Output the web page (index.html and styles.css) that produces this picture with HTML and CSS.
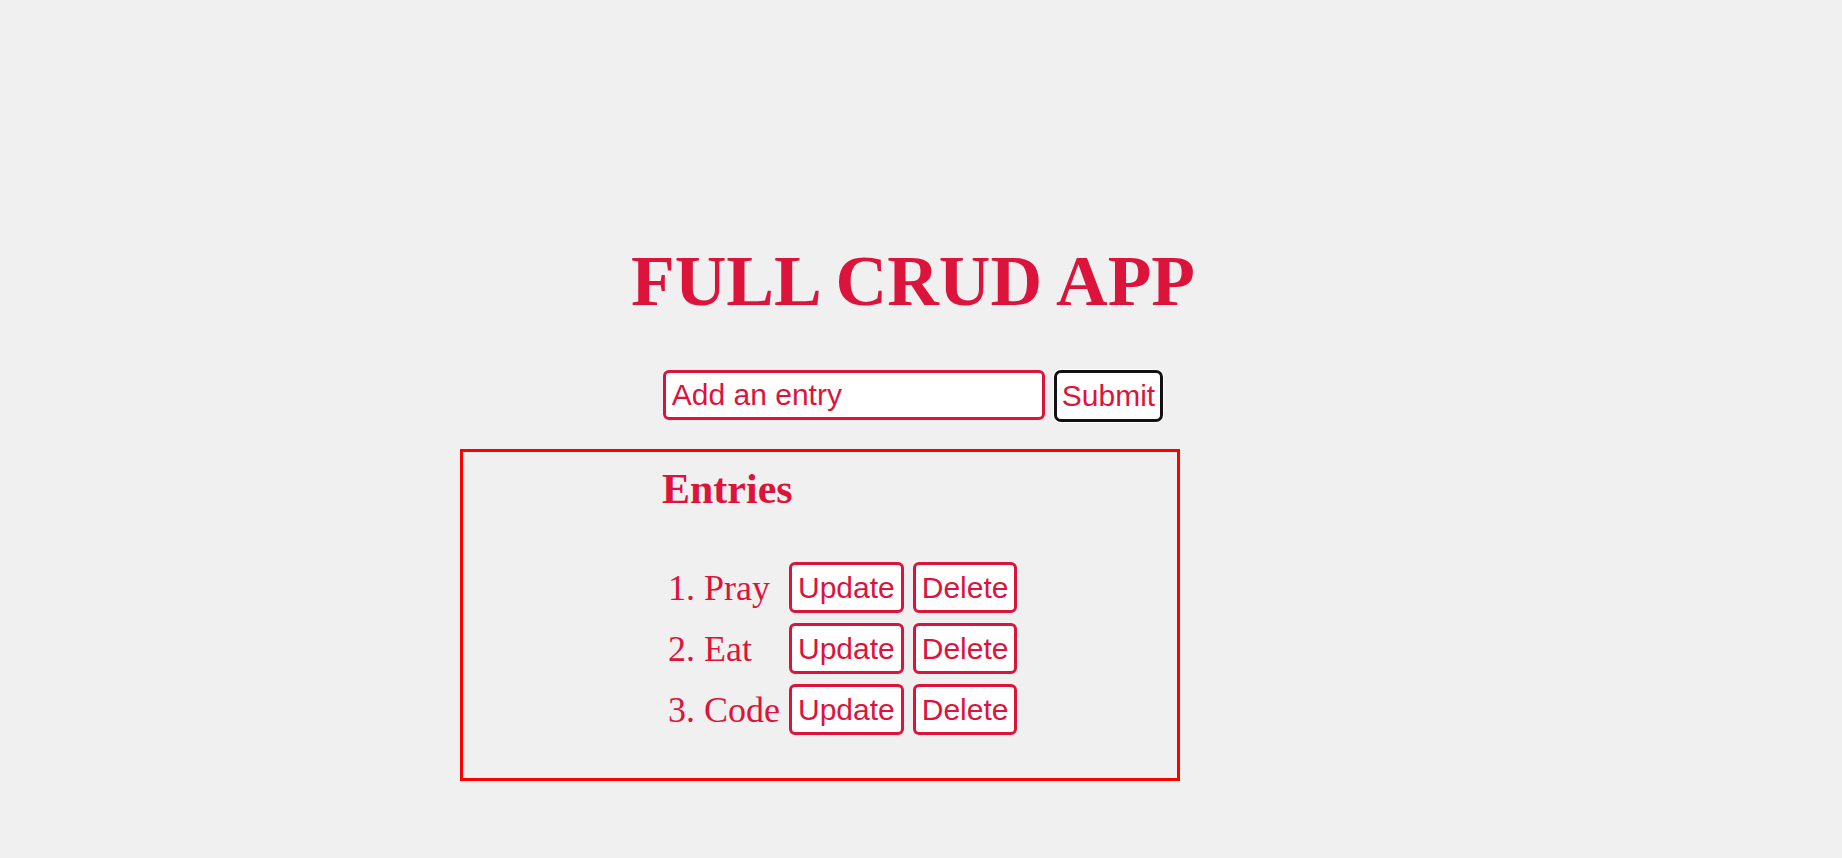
FILE: index.html
```html
<!DOCTYPE html>
<html lang="en">
<head>
<meta charset="utf-8">
<title>Full CRUD App</title>
<link rel="stylesheet" href="styles.css">
</head>
<body>
<div class="app">
  <h1 class="title">FULL CRUD APP</h1>
  <form class="entry-form">
    <input class="entry-input" type="text" placeholder="Add an entry">
    <button class="submit-btn" type="button">Submit</button>
  </form>
</div>
<section class="entries">
  <h2 class="entries-title">Entries</h2>
  <ol class="entry-list">
    <li class="entry"><span class="entry-text">Pray</span> <button class="btn" type="button">Update</button> <button class="btn" type="button">Delete</button></li>
    <li class="entry"><span class="entry-text">Eat</span> <button class="btn" type="button">Update</button> <button class="btn" type="button">Delete</button></li>
    <li class="entry"><span class="entry-text">Code</span> <button class="btn" type="button">Update</button> <button class="btn" type="button">Delete</button></li>
  </ol>
</section>
</body>
</html>
```
FILE: styles.css
```css
html, body {
  margin: 0;
  padding: 0;
  background: #f0f0f0;
}

body {
  font-family: "Liberation Serif", "Times New Roman", serif;
  color: #dc143c;
}

.app {
  padding-top: 240px;
  padding-right: 16px;
  text-align: center;
}

.title {
  margin: 0;
  font-size: 71.5px;
  font-weight: bold;
  line-height: normal;
}

.entry-form {
  margin-top: 48px;
  display: flex;
  justify-content: center;
  align-items: flex-start;
  gap: 9px;
}

.entry-input {
  box-sizing: border-box;
  width: 382px;
  height: 50px;
  border: 3px solid #dc143c;
  border-radius: 6px;
  background: #fff;
  padding: 0 6px;
  font-family: "Liberation Sans", Arial, sans-serif;
  font-size: 30px;
  color: #dc143c;
  outline: none;
}

.entry-input::placeholder {
  color: #dc143c;
  opacity: 1;
}

.submit-btn {
  box-sizing: border-box;
  height: 52px;
  padding: 0 5px;
  border: 3px solid #111;
  border-radius: 7px;
  box-shadow: 0 0 0 1px #fff;
  background: #fff;
  font-family: "Liberation Sans", Arial, sans-serif;
  font-size: 30px;
  color: #dc143c;
}

.entries {
  box-sizing: border-box;
  width: 720px;
  height: 332px;
  margin: 27px 0 0 460px;
  border: 3px solid #ff0000;
  padding: 13px 0 0 199px;
}

.entries-title {
  margin: 0;
  font-size: 42px;
  font-weight: bold;
  line-height: normal;
}

.entry-list {
  margin: 49px 0 0;
  padding-left: 42px;
  font-size: 36px;
}

.entry {
  margin-bottom: 10px;
}

.entry-text {
  display: inline-block;
  width: 76px;
}

.btn {
  vertical-align: 2px;
  padding: 6px 6px;
  border: 3px solid #dc143c;
  border-radius: 6px;
  background: #fff;
  font-family: "Liberation Sans", Arial, sans-serif;
  font-size: 30px;
  line-height: 33px;
  color: #dc143c;
}
```
